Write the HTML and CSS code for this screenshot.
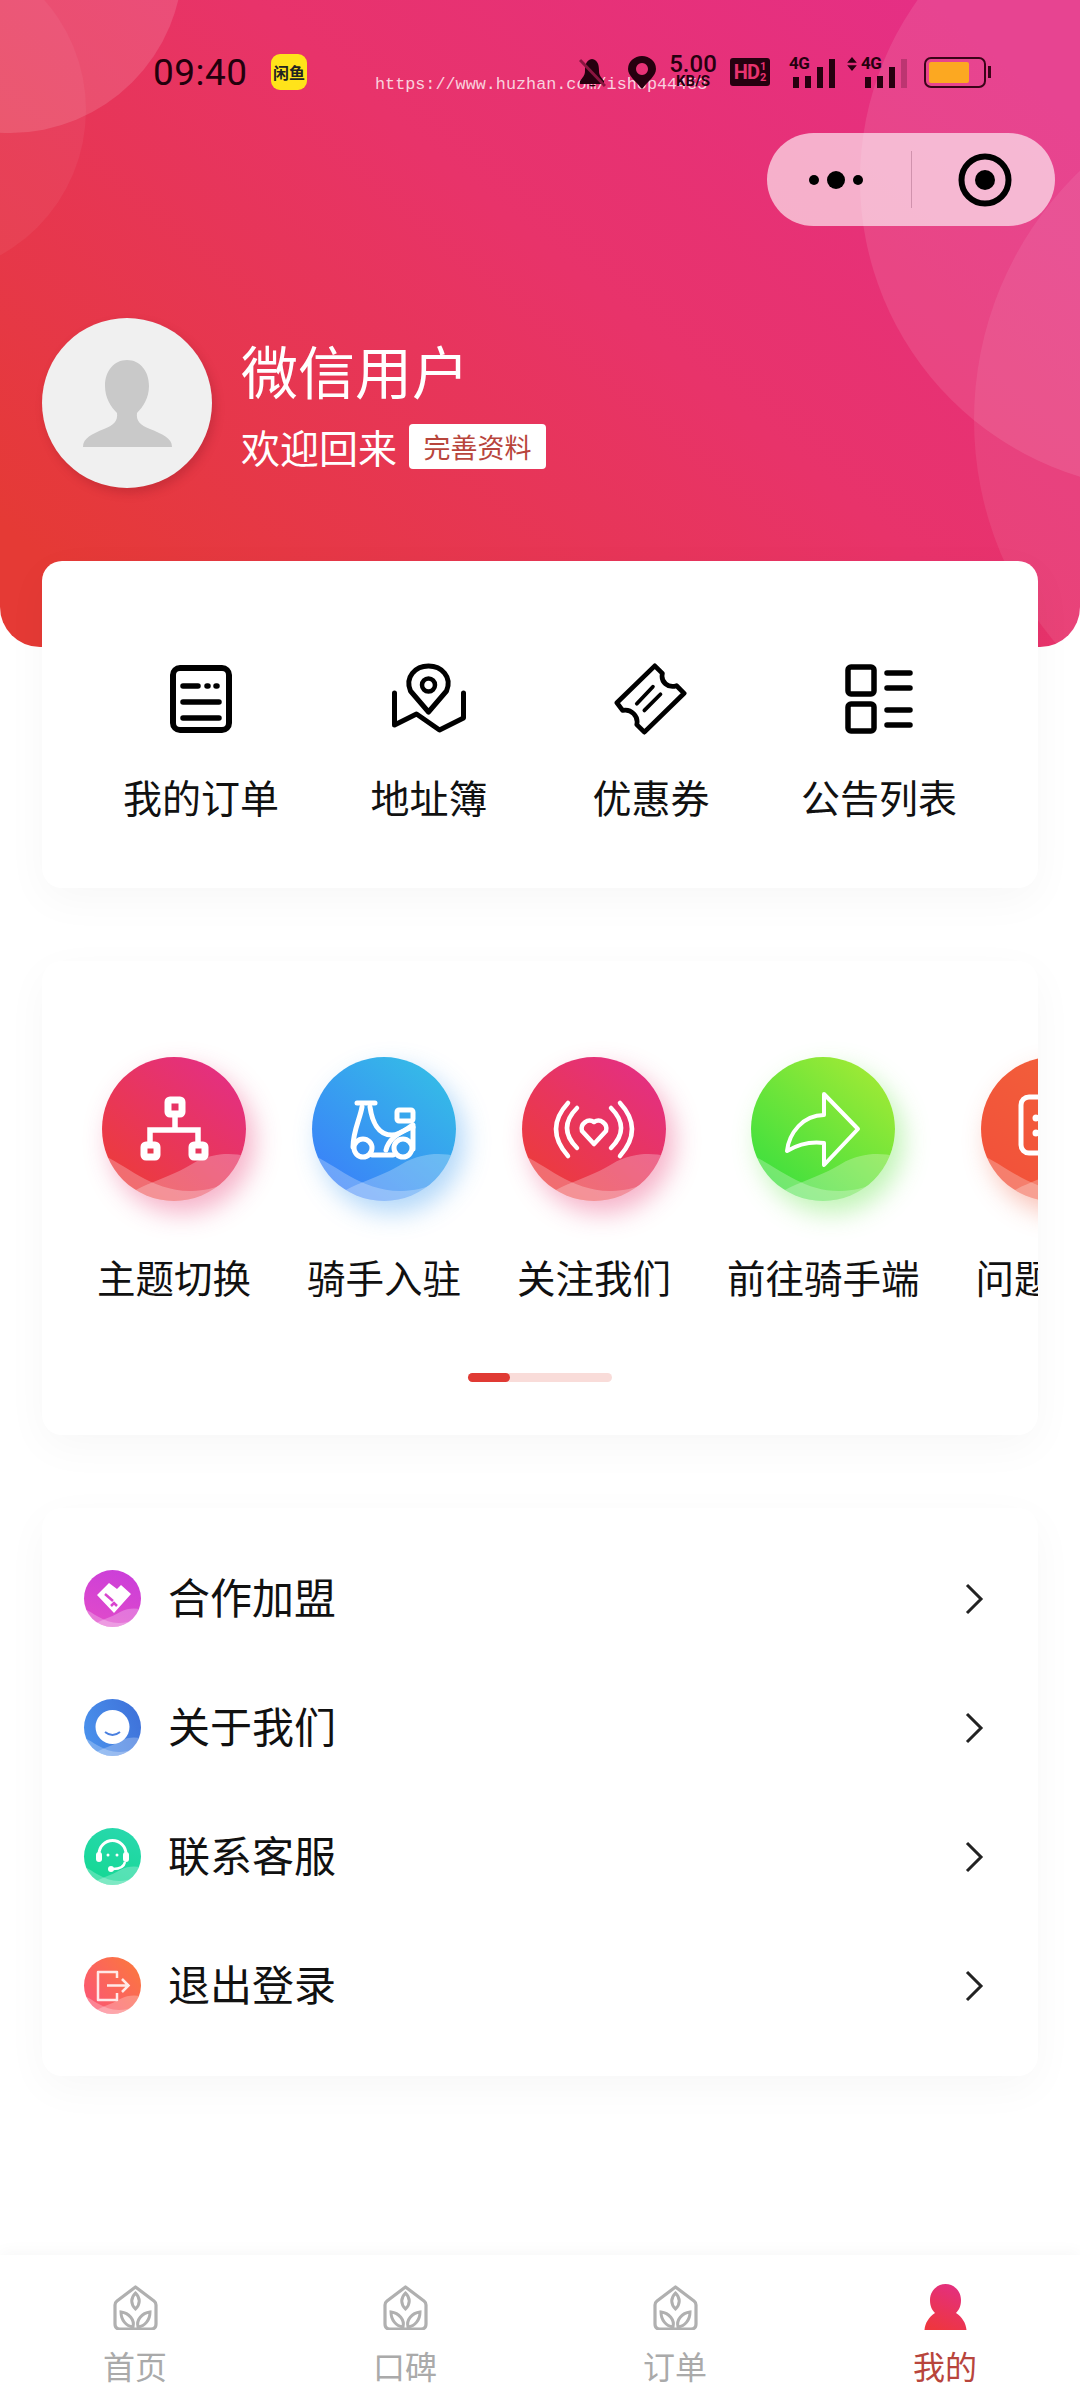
FILE: index.html
```html
<!DOCTYPE html>
<html lang="zh-CN">
<head>
    <meta charset="UTF-8">
    <meta name="viewport" content="width=device-width, initial-scale=1.0">
    <title>我的</title>
    <link rel="stylesheet" href="styles.css">
</head>
<body>
    <svg class="defs" aria-hidden="true">
        <symbol id="wave" viewBox="0 0 144 144">
            <path d="M0 98C22 106 50 135 90 134C115 133 130 125 144 112V144H0Z" fill="#fff" opacity=".26"/>
            <path d="M16 144C40 126 70 120 90 107C110 95 130 96 144 99V144Z" fill="#fff" opacity=".26"/>
        </symbol>
        <symbol id="plant" viewBox="0 0 45 46">
            <path d="M22.500 3L41 17Q43 18.500 43 21V40Q43 45 38 45H7Q2 45 2 40V21Q2 18.500 4 17Z" fill="none" stroke="#b0b0b0" stroke-width="3.200" stroke-linejoin="round"/>
            <path d="M22.500 9C17.500 14 17.500 20 22.500 25C27.500 20 27.500 14 22.500 9Z" fill="none" stroke="#b0b0b0" stroke-width="3"/>
            <path d="M8 28C8 36 13 42 20 43C22 36 16 29 8 28Z" fill="none" stroke="#b0b0b0" stroke-width="3"/>
            <path d="M37 28C37 36 32 42 25 43C23 36 29 29 37 28Z" fill="none" stroke="#b0b0b0" stroke-width="3"/>
        </symbol>
    </svg>

    <div class="page">
        <header class="hero">
            <div class="blob blob-a"></div>
            <div class="blob blob-b"></div>
            <div class="blob blob-c"></div>
            <div class="blob blob-d"></div>
            <div class="watermark">https://www.huzhan.com/ishop44453</div>

            <div class="status-bar">
                <span class="time">09:40</span>
                <span class="app-badge">闲鱼</span>
                <div class="status-icons">
                    <svg class="st-bell" viewBox="0 0 27 31">
                        <path d="M13 2C7 3 6 8 6 14C6 19 3 21 1 24V27H25V24C23 21 20 19 20 14C20 8 19 3 13 2Z" fill="#26000f"/>
                        <path d="M10 28a4 3 0 0 0 7 0Z" fill="#26000f"/>
                        <path d="M1 3L26 29" stroke="#8a1540" stroke-width="3"/>
                    </svg>
                    <svg class="st-pin" viewBox="0 0 28 33">
                        <path fill-rule="evenodd" d="M14 33C8 25 0 20 0 13A14 13 0 0 1 28 13C28 20 20 25 14 33ZM14 7a6 6 0 1 0 .01 0Z" fill="#26000f"/>
                    </svg>
                    <div class="st-speed"><b>5.00</b><small>KB/S</small></div>
                    <div class="st-hd"><b>HD</b><small>1<br>2</small></div>
                    <div class="st-signal">
                        <i class="net">4G</i>
                        <span class="bar b1"></span><span class="bar b2"></span><span class="bar b3"></span><span class="bar b4"></span>
                    </div>
                    <div class="st-signal wide">
                        <svg class="updown" viewBox="0 0 11 16"><path d="M5.500 0L11 6.500H0ZM5.500 16L0 9.500H11Z" fill="#26000f"/></svg>
                        <i class="net">4G</i>
                        <span class="bar b1"></span><span class="bar b2"></span><span class="bar b3"></span><span class="bar b4 off"></span>
                    </div>
                    <div class="st-battery"><span class="level"></span></div>
                </div>
            </div>

            <div class="capsule">
                <div class="capsule-dots"><span class="dot"></span><span class="dot big"></span><span class="dot"></span></div>
                <div class="capsule-line"></div>
                <svg class="capsule-target" viewBox="0 0 54 54">
                    <circle cx="27" cy="27" r="23.500" fill="none" stroke="#000" stroke-width="6"/>
                    <circle cx="27" cy="27" r="10" fill="#000"/>
                </svg>
            </div>

            <div class="profile">
                <div class="avatar">
                    <svg viewBox="0 0 170 170">
                        <path d="M85 42C72 42 63 53 63 68C63 80 69 89 75 95C76 103 72 107 62 111C50 116 41 120 41 129H130C130 120 120 116 108 111C98 107 94 103 95 95C101 89 107 80 107 68C107 53 98 42 85 42Z" fill="#c9c9c9"/>
                    </svg>
                </div>
                <div class="profile-text">
                    <div class="nickname">微信用户</div>
                    <div class="welcome">
                        <span>欢迎回来</span>
                        <span class="complete-btn">完善资料</span>
                    </div>
                </div>
            </div>
        </header>

        <section class="card shortcuts">
            <div class="shortcut">
                <svg class="shortcut-icon" viewBox="0 0 72 72">
                    <rect x="8" y="5" width="56" height="62" rx="7" fill="none" stroke="#000" stroke-width="6"/>
                    <path d="M18 23H33M42 23H43M51 23H52M18 39H54M18 55H54" fill="none" stroke="#000" stroke-width="5.500" stroke-linecap="round"/>
                </svg>
                <span>我的订单</span>
            </div>
            <div class="shortcut">
                <svg class="shortcut-icon" viewBox="0 0 75 72">
                    <path d="M37 49L19 28C13 14 24 3 37 3C50 3 61 14 55 28Z" fill="none" stroke="#000" stroke-width="5" stroke-linejoin="round"/>
                    <circle cx="37" cy="22" r="6.500" fill="none" stroke="#000" stroke-width="4.500"/>
                    <path d="M3 30V62L25 51L48 67L72 55V30" fill="none" stroke="#000" stroke-width="5" stroke-linecap="round" stroke-linejoin="round"/>
                </svg>
                <span>地址簿</span>
            </div>
            <div class="shortcut">
                <svg class="shortcut-icon" viewBox="0 0 80 76">
                    <path d="M44 3L52 11C50 20 58 27 67 24L75 32L33 73L25 65C27 56 19 48 10 50L4 42Z" fill="none" stroke="#000" stroke-width="5" stroke-linejoin="round"/>
                    <path d="M42 25L25 43M50 33L33 50" fill="none" stroke="#000" stroke-width="4" stroke-linecap="round"/>
                </svg>
                <span>优惠券</span>
            </div>
            <div class="shortcut">
                <svg class="shortcut-icon" viewBox="0 0 72 72">
                    <rect x="5" y="4" width="26" height="27" rx="3" fill="none" stroke="#000" stroke-width="5.500"/>
                    <rect x="5" y="41" width="26" height="27" rx="3" fill="none" stroke="#000" stroke-width="5.500"/>
                    <path d="M44 10H67M44 25H67M44 47H67M44 62H67" fill="none" stroke="#000" stroke-width="5.500" stroke-linecap="round"/>
                </svg>
                <span>公告列表</span>
            </div>
        </section>

        <section class="card services">
            <div class="service-track">
                <div class="service">
                    <div class="bubble bubble-red">
                        <svg viewBox="0 0 144 144">
                            <path d="M73 60V73M48 85V73H96V85" fill="none" stroke="#fff" stroke-width="5.500"/>
                            <rect x="66" y="43" width="14" height="14" rx="2" fill="none" stroke="#fff" stroke-width="7"/>
                            <rect x="42" y="88" width="13" height="12" rx="2" fill="none" stroke="#fff" stroke-width="7"/>
                            <rect x="90" y="88" width="13" height="12" rx="2" fill="none" stroke="#fff" stroke-width="7"/>
                            <use href="#wave"/>
                        </svg>
                    </div>
                    <span>主题切换</span>
                </div>
                <div class="service">
                    <div class="bubble bubble-blue">
                        <svg viewBox="0 0 144 144">
                            <g fill="none" stroke="#fff" stroke-width="5" stroke-linecap="round" stroke-linejoin="round">
                                <path d="M45 46H63"/>
                                <path d="M50 50C48 62 41 74 41 90"/>
                                <path d="M58 50C60 64 66 78 80 78C88 78 94 72 101 68V92"/>
                                <path d="M60 98H81"/>
                                <path d="M74 93C76 84 84 76 101 70"/>
                                <circle cx="51" cy="91" r="9"/>
                                <circle cx="91" cy="91" r="9"/>
                                <rect x="85" y="53" width="16" height="11" rx="2"/>
                            </g>
                            <use href="#wave"/>
                        </svg>
                    </div>
                    <span>骑手入驻</span>
                </div>
                <div class="service">
                    <div class="bubble bubble-red">
                        <svg viewBox="0 0 144 144">
                            <g fill="none" stroke="#fff" stroke-width="4.500" stroke-linecap="round" stroke-linejoin="round">
                                <path d="M72 87L60 74A8 8 0 0 1 72 65A8 8 0 0 1 84 74Z"/>
                                <path d="M55 51Q35 71 55 91M89 51Q109 71 89 91"/>
                                <path d="M46 46Q22 72 46 99M98 46Q122 72 98 99"/>
                            </g>
                            <use href="#wave"/>
                        </svg>
                    </div>
                    <span>关注我们</span>
                </div>
                <div class="service">
                    <div class="bubble bubble-green">
                        <svg viewBox="0 0 144 144">
                            <path d="M73 37L107 72L73 108V86C58 84 46 88 36 94C38 76 52 58 73 58Z" fill="none" stroke="#fff" stroke-width="4" stroke-linejoin="round"/>
                            <use href="#wave"/>
                        </svg>
                    </div>
                    <span>前往骑手端</span>
                </div>
                <div class="service">
                    <div class="bubble bubble-orange">
                        <svg viewBox="0 0 144 144">
                            <rect x="40" y="40" width="62" height="56" rx="8" fill="none" stroke="#fff" stroke-width="5"/>
                            <circle cx="55" cy="61" r="3.500" fill="#fff"/>
                            <circle cx="55" cy="76" r="3.500" fill="#fff"/>
                            <use href="#wave"/>
                        </svg>
                    </div>
                    <span>问题反馈</span>
                </div>
            </div>
            <div class="scroll-track"><div class="scroll-thumb"></div></div>
        </section>

        <section class="card menu">
            <div class="menu-row">
                <div class="menu-icon menu-purple">
                    <svg viewBox="0 0 57 57">
                        <path d="M13 25L25 13L33 19L37 15L47 24L30 43Z" fill="#fff"/>
                        <path d="M21 24L29 31M27 36L30 33L33 36" fill="none" stroke="#d946cf" stroke-width="2.500"/>
                        <use href="#wave"/>
                    </svg>
                </div>
                <span class="menu-label">合作加盟</span>
                <svg class="chevron" viewBox="0 0 20 34"><path d="M3 3L17 17L3 31" fill="none" stroke="#222" stroke-width="3"/></svg>
            </div>
            <div class="menu-row">
                <div class="menu-icon menu-blue">
                    <svg viewBox="0 0 57 57">
                        <circle cx="28.500" cy="28" r="17" fill="#fff"/>
                        <path d="M21 33Q28.500 39 36 33" fill="none" stroke="#4a80e0" stroke-width="2"/>
                        <use href="#wave"/>
                    </svg>
                </div>
                <span class="menu-label">关于我们</span>
                <svg class="chevron" viewBox="0 0 20 34"><path d="M3 3L17 17L3 31" fill="none" stroke="#222" stroke-width="3"/></svg>
            </div>
            <div class="menu-row">
                <div class="menu-icon menu-green">
                    <svg viewBox="0 0 57 57">
                        <path d="M15 26A13.500 13.500 0 0 1 42 26" fill="none" stroke="#fff" stroke-width="3"/>
                        <rect x="12" y="24" width="6" height="10" rx="3" fill="#fff"/>
                        <rect x="39" y="24" width="6" height="10" rx="3" fill="#fff"/>
                        <path d="M41 34C40 39 36 41 29 41" fill="none" stroke="#fff" stroke-width="2.500"/>
                        <circle cx="27" cy="41" r="3" fill="#fff"/>
                        <circle cx="24" cy="27" r="1.500" fill="#fff"/>
                        <circle cx="33" cy="27" r="1.500" fill="#fff"/>
                        <use href="#wave"/>
                    </svg>
                </div>
                <span class="menu-label">联系客服</span>
                <svg class="chevron" viewBox="0 0 20 34"><path d="M3 3L17 17L3 31" fill="none" stroke="#222" stroke-width="3"/></svg>
            </div>
            <div class="menu-row">
                <div class="menu-icon menu-orange">
                    <svg viewBox="0 0 57 57">
                        <path d="M33 21V15H14V43H33V36" fill="none" stroke="#fff" stroke-width="2.500" stroke-linejoin="round" opacity=".85"/>
                        <path d="M23 28.500H44M38 22L44.500 28.500L38 35" fill="none" stroke="#fff" stroke-width="2.500" opacity=".85"/>
                        <use href="#wave"/>
                    </svg>
                </div>
                <span class="menu-label">退出登录</span>
                <svg class="chevron" viewBox="0 0 20 34"><path d="M3 3L17 17L3 31" fill="none" stroke="#222" stroke-width="3"/></svg>
            </div>
        </section>

        <nav class="tabbar">
            <div class="tab">
                <svg class="tab-icon" viewBox="0 0 45 46"><use href="#plant"/></svg>
                <span>首页</span>
            </div>
            <div class="tab">
                <svg class="tab-icon" viewBox="0 0 45 46"><use href="#plant"/></svg>
                <span>口碑</span>
            </div>
            <div class="tab">
                <svg class="tab-icon" viewBox="0 0 45 46"><use href="#plant"/></svg>
                <span>订单</span>
            </div>
            <div class="tab active">
                <svg class="tab-icon" viewBox="0 0 45 46">
                    <defs>
                        <linearGradient id="personFill" x1="0.700" y1="0" x2="0.300" y2="1">
                            <stop offset="0" stop-color="#e32f80"/>
                            <stop offset="1" stop-color="#ee363f"/>
                        </linearGradient>
                    </defs>
                    <path d="M22.500 0C14 0 7 7 7 16C7 22 9 26 12 29C6 33 2 39 1.500 46H43.500C43 39 39 33 33 29C36 26 38 22 38 16C38 7 31 0 22.500 0Z" fill="url(#personFill)"/>
                </svg>
                <span>我的</span>
            </div>
        </nav>
    </div>
</body>
</html>
```

FILE: styles.css
```css
* {
    box-sizing: border-box;
}
html, body {
    margin: 0;
    padding: 0;
}
body {
    font-family: "Noto Sans CJK SC", "Noto Sans", sans-serif;
    background: #fff;
    color: #111;
}
.defs {
    display: none;
}
.page {
    width: 1080px;
    height: 2400px;
    display: flex;
    flex-direction: column;
    overflow: hidden;
}

/* header */
.hero {
    position: relative;
    height: 647px;
    flex-shrink: 0;
    display: flex;
    flex-direction: column;
    overflow: hidden;
    border-radius: 0 0 40px 40px;
    background: linear-gradient(40deg, #e53a35 8%, #e8336a 55%, #e52f85 92%);
}
.blob {
    position: absolute;
    border-radius: 50%;
}
.blob-a {
    left: -163px;
    top: -213px;
    width: 346px;
    height: 346px;
    background: rgba(255, 255, 255, 0.13);
}
.blob-b {
    left: -246px;
    top: -56px;
    width: 332px;
    height: 332px;
    background: rgba(255, 255, 255, 0.05);
}
.blob-c {
    left: 860px;
    top: -130px;
    width: 620px;
    height: 620px;
    background: rgba(255, 255, 255, 0.1);
}
.blob-d {
    left: 974px;
    top: 74px;
    width: 692px;
    height: 692px;
    background: rgba(255, 255, 255, 0.08);
}
.watermark {
    position: absolute;
    left: 375px;
    top: 75px;
    font-family: "Liberation Mono", monospace;
    font-size: 16.800px;
    line-height: 20px;
    color: rgba(255, 255, 255, 0.78);
}

/* status bar */
.status-bar {
    position: relative;
    height: 44px;
    margin-top: 50px;
    padding-left: 153px;
    display: flex;
    align-items: center;
    color: #26000f;
}
.time {
    font-family: Roboto, sans-serif;
    font-size: 37px;
    letter-spacing: 0.500px;
    width: 118px;
    color: #22000c;
}
.app-badge {
    width: 36px;
    height: 36px;
    border-radius: 9px;
    background: #ffe31a;
    font-size: 16px;
    font-weight: 700;
    line-height: 36px;
    text-align: center;
    color: #222;
    white-space: nowrap;
}
.status-icons {
    position: absolute;
    left: 579px;
    top: 5px;
    display: flex;
    align-items: center;
    height: 34px;
}
.st-bell {
    width: 27px;
    height: 31px;
    margin-right: 22px;
}
.st-pin {
    width: 28px;
    height: 33px;
    margin-right: 12px;
}
.st-speed {
    width: 50px;
    margin-right: 12px;
    font-family: Roboto, sans-serif;
    text-align: center;
}
.st-speed b {
    display: block;
    font-size: 24px;
    line-height: 19px;
    font-weight: 500;
}
.st-speed small {
    display: block;
    font-size: 15px;
    line-height: 15px;
    font-weight: 700;
}
.st-hd {
    width: 40px;
    height: 28px;
    margin-right: 19px;
    border-radius: 3px;
    background: #26000f;
    display: flex;
    align-items: center;
    justify-content: center;
    gap: 1px;
    color: #e8336f;
    font-family: Roboto, sans-serif;
}
.st-hd b {
    font-size: 20px;
    letter-spacing: -1px;
}
.st-hd small {
    font-size: 11px;
    line-height: 11px;
    font-weight: 700;
}
.st-signal {
    position: relative;
    width: 46px;
    height: 32px;
    margin-right: 12px;
    display: flex;
    align-items: flex-end;
    gap: 6px;
    padding-left: 4px;
}
.st-signal.wide {
    width: 60px;
    margin-right: 17px;
    padding-left: 18px;
}
.net {
    position: absolute;
    left: 0;
    top: -2px;
    font-family: Roboto, sans-serif;
    font-style: normal;
    font-weight: 700;
    font-size: 17px;
    line-height: 18px;
    letter-spacing: -0.500px;
}
.wide .net {
    left: 14px;
}
.updown {
    position: absolute;
    left: 0;
    top: 1px;
    width: 10px;
    height: 14px;
}
.bar {
    flex-shrink: 0;
    width: 6px;
    background: #26000f;
}
.b1 {
    height: 11px;
}
.b2 {
    height: 12px;
}
.b3 {
    height: 21px;
}
.b4 {
    height: 29px;
}
.b4.off {
    background: rgba(38, 0, 15, 0.22);
}
.st-battery {
    position: relative;
    width: 62px;
    height: 31px;
    padding: 3px;
    border: 2.500px solid #3a0418;
    border-radius: 7px;
}
.st-battery::after {
    content: "";
    position: absolute;
    right: -7px;
    top: 7px;
    width: 3px;
    height: 12px;
    background: #3a0418;
}
.level {
    display: block;
    width: 40px;
    height: 100%;
    border-radius: 2px;
    background: #fca821;
}

/* capsule */
.capsule {
    position: relative;
    width: 288px;
    height: 93px;
    margin: 39px 25px 0 auto;
    border-radius: 47px;
    background: rgba(255, 255, 255, 0.62);
    display: flex;
    align-items: center;
}
.capsule-dots {
    width: 144px;
    padding-left: 42px;
    display: flex;
    align-items: center;
    gap: 8px;
}
.dot {
    width: 10px;
    height: 10px;
    border-radius: 50%;
    background: #000;
}
.dot.big {
    width: 18px;
    height: 18px;
}
.capsule-line {
    width: 1px;
    height: 57px;
    background: rgba(120, 60, 90, 0.3);
}
.capsule-target {
    width: 54px;
    height: 54px;
    margin-left: 46px;
}

/* profile */
.profile {
    position: relative;
    display: flex;
    align-items: center;
    gap: 29px;
    margin-top: 92px;
    padding-left: 42px;
}
.avatar {
    width: 170px;
    height: 170px;
    border-radius: 50%;
    background: #f0f0f0;
    box-shadow: 3px 5px 10px rgba(120, 20, 30, 0.25);
}
.avatar svg {
    display: block;
}
.nickname {
    font-size: 57px;
    line-height: 64px;
    color: #fff;
}
.welcome {
    display: flex;
    align-items: center;
    gap: 12px;
    margin-top: 23px;
    font-size: 39px;
    line-height: 45px;
    color: #fff;
}
.complete-btn {
    width: 137px;
    height: 45px;
    border-radius: 4px;
    background: #fff;
    font-size: 27px;
    line-height: 45px;
    text-align: center;
    color: #b8453c;
}

/* cards */
.card {
    position: relative;
    width: 996px;
    margin-left: 42px;
    flex-shrink: 0;
    background: #fff;
    border-radius: 20px;
    box-shadow: 0 12px 44px rgba(0, 0, 0, 0.035);
}
.shortcuts {
    height: 327px;
    margin-top: -86px;
    padding: 102px 0 0 45px;
    display: grid;
    grid-template-columns: 228px 228px 216px 240px;
    align-items: start;
}
.shortcut {
    display: flex;
    flex-direction: column;
    align-items: center;
    font-size: 39px;
    line-height: 52px;
    white-space: nowrap;
}
.shortcut-icon {
    height: 72px;
    width: 80px;
    margin-bottom: 35px;
}
.services {
    height: 474px;
    margin-top: 73px;
    overflow: hidden;
}
.service-track {
    display: flex;
    gap: 56px;
    padding: 96px 0 0 55px;
}
.service {
    display: flex;
    flex-direction: column;
    align-items: center;
    flex-shrink: 0;
    font-size: 38.500px;
    line-height: 52px;
    white-space: nowrap;
}
.bubble {
    width: 144px;
    height: 144px;
    border-radius: 50%;
    margin-bottom: 49px;
}
.bubble svg {
    display: block;
    border-radius: 50%;
}
.bubble-red {
    background: linear-gradient(40deg, #ec3b3d 15%, #e4307e 85%);
    box-shadow: 8px 12px 26px rgba(232, 50, 110, 0.38);
}
.bubble-blue {
    background: linear-gradient(40deg, #3a84f8 15%, #35b8e8 85%);
    box-shadow: 8px 12px 26px rgba(50, 150, 240, 0.38);
}
.bubble-green {
    background: linear-gradient(40deg, #41e03e 15%, #9ae936 85%);
    box-shadow: 8px 12px 26px rgba(90, 225, 60, 0.38);
}
.bubble-orange {
    background: linear-gradient(40deg, #f2523a 15%, #f2603a 85%);
    box-shadow: 8px 12px 26px rgba(240, 90, 60, 0.38);
}
.scroll-track {
    position: absolute;
    left: 426px;
    top: 412px;
    width: 144px;
    height: 9px;
    border-radius: 5px;
    background: #f9dcd9;
}
.scroll-thumb {
    width: 42px;
    height: 9px;
    border-radius: 5px;
    background: #e03a34;
}

/* menu list */
.menu {
    height: 568px;
    margin-top: 73px;
    padding: 26px 0;
}
.menu-row {
    height: 129px;
    display: flex;
    align-items: center;
    padding: 0 54px 0 42px;
}
.menu-icon {
    width: 57px;
    height: 57px;
    border-radius: 50%;
    margin-right: 27px;
}
.menu-icon svg {
    display: block;
    border-radius: 50%;
}
.menu-purple {
    background: linear-gradient(200deg, #c93ddb, #e34cc8);
}
.menu-blue {
    background: linear-gradient(250deg, #3e6fd8, #4a94ee);
}
.menu-green {
    background: linear-gradient(20deg, #12d890, #2ad8b0);
}
.menu-orange {
    background: linear-gradient(230deg, #fb7a3a, #fb527a);
}
.menu-label {
    flex: 1;
    font-size: 42px;
    line-height: 56px;
    padding-bottom: 5px;
}
.chevron {
    width: 20px;
    height: 34px;
}

/* bottom tabs */
.tabbar {
    margin-top: auto;
    height: 145px;
    flex-shrink: 0;
    display: grid;
    grid-template-columns: repeat(4, 1fr);
    background: #fff;
    box-shadow: 0 -4px 14px rgba(0, 0, 0, 0.03);
}
.tab {
    display: flex;
    flex-direction: column;
    align-items: center;
    padding-top: 29px;
    font-size: 32px;
    line-height: 42px;
    color: #aaa;
}
.tab-icon {
    width: 45px;
    height: 46px;
    margin-bottom: 14px;
}
.tab.active {
    color: #b8453c;
}
```
